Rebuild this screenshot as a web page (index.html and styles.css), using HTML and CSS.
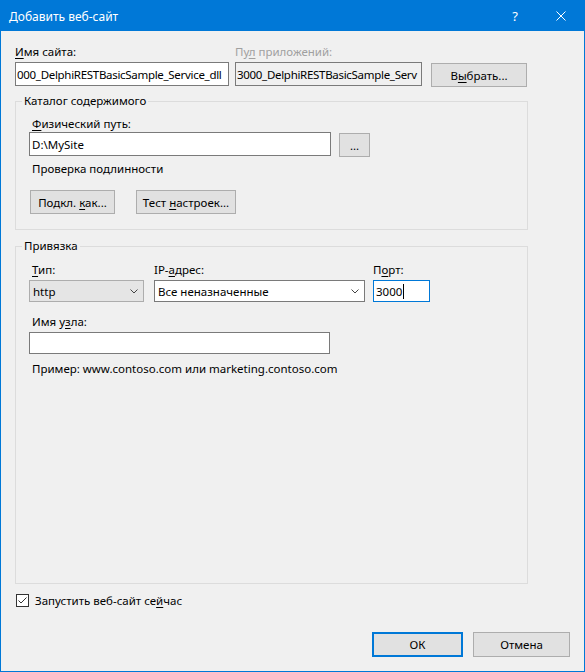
FILE: index.html
```html
<!DOCTYPE html>
<html lang="ru">
<head>
  <meta charset="UTF-8">
  <title>Добавить веб-сайт</title>
  <link rel="stylesheet" href="styles.css">
</head>
<body>
  <div class="window">
    <div class="titlebar">
      <span class="title">Добавить веб-сайт</span>
      <span class="caption-btn">?</span>
      <span class="caption-btn">
        <svg width="10" height="10" viewBox="0 0 10 10">
          <path d="M0.5 0.5 L9.5 9.5 M9.5 0.5 L0.5 9.5" stroke="#fff" stroke-width="1" fill="none"/>
        </svg>
      </span>
    </div>

    <div class="content">
      <div class="site-row">
        <div class="field site-name">
          <label><u>И</u>мя сайта:</label>
          <div class="textbox tight">000_DelphiRESTBasicSample_Service_dll</div>
        </div>
        <div class="field app-pool">
          <label class="disabled">Пу<u>л</u> приложений:</label>
          <div class="textbox tight readonly">3000_DelphiRESTBasicSample_Serv</div>
        </div>
        <button class="btn select-btn">В<u>ы</u>брать...</button>
      </div>

      <fieldset class="group content-group">
        <legend>Каталог содержимого</legend>
        <div class="group-body">
          <label class="caption path-label"><u>Ф</u>изический путь:</label>
          <div class="path-row">
            <div class="textbox path-box">D:\MySite</div>
            <button class="btn browse-btn">...</button>
          </div>
          <div class="caption auth-label">Проверка подлинности</div>
          <div class="auth-buttons">
            <button class="btn connect-btn">Подкл. <u>к</u>ак...</button>
            <button class="btn test-btn">Тест <u>н</u>астроек...</button>
          </div>
        </div>
      </fieldset>

      <fieldset class="group binding-group">
        <legend>Привязка</legend>
        <div class="group-body">
          <div class="bind-row">
            <div class="field type-field">
              <label class="caption"><u>Т</u>ип:</label>
              <div class="combo combo-gray">
                <span>http</span>
                <svg class="chevron" width="8" height="5" viewBox="0 0 8 5">
                  <path d="M0.5 0.5 L4 4 L7.5 0.5" stroke="#444" stroke-width="1" fill="none"/>
                </svg>
              </div>
            </div>
            <div class="field ip-field">
              <label>IP-<u>а</u>дрес:</label>
              <div class="combo">
                <span>Все неназначенные</span>
                <svg class="chevron" width="8" height="5" viewBox="0 0 8 5">
                  <path d="M0.5 0.5 L4 4 L7.5 0.5" stroke="#444" stroke-width="1" fill="none"/>
                </svg>
              </div>
            </div>
            <div class="field port-field">
              <label>П<u>о</u>рт:</label>
              <div class="textbox focused">3000<span class="caret"></span></div>
            </div>
          </div>
          <label class="caption host-label">Имя у<u>з</u>ла:</label>
          <div class="textbox host-box"></div>
          <div class="caption example">Пример: www.contoso.com или marketing.contoso.com</div>
        </div>
      </fieldset>

      <div class="checkbox-row">
        <svg class="checkbox" width="13" height="13" viewBox="0 0 13 13">
          <rect x="0.5" y="0.5" width="12" height="12" fill="#fff" stroke="#333"/>
          <path d="M2.5 6.5 L5 9 L10.5 3.5" stroke="#333" stroke-width="1" fill="none"/>
        </svg>
        <span>Запустить веб-сайт се<u>й</u>час</span>
      </div>

      <div class="dialog-buttons">
        <button class="btn ok-btn">ОК</button>
        <button class="btn cancel-btn">Отмена</button>
      </div>
    </div>
  </div>
</body>
</html>
```

FILE: styles.css
```css
/* Add website dialog */
* {
  box-sizing: border-box;
}

body {
  margin: 0;
  font-family: "Segoe UI", "Noto Sans", sans-serif;
  font-size: 11.5px;
  color: #000;
  background: #f0f0f0;
}

u {
  text-decoration: underline;
  text-underline-offset: 2px;
}

.window {
  width: 585px;
  height: 672px;
  border: 1px solid #0078d7;
  display: flex;
  flex-direction: column;
}

.titlebar {
  height: 30px;
  background: #0078d7;
  color: #fff;
  display: flex;
  align-items: center;
  padding-left: 8px;
}

.title {
  flex: 1;
  font-size: 12px;
}

.caption-btn {
  width: 46px;
  height: 30px;
  display: flex;
  align-items: center;
  justify-content: center;
  font-size: 13px;
}

.content {
  flex: 1;
  display: flex;
  flex-direction: column;
  padding: 13px 14px 14px 14px;
}

label,
.caption {
  display: block;
  line-height: 16px;
}

.disabled {
  color: #a0a0a0;
}

.field label {
  margin-bottom: 2px;
}

/* text boxes and buttons */
.textbox {
  height: 24px;
  border: 1px solid #7a7a7a;
  background: #fff;
  padding: 0 2px;
  display: flex;
  align-items: center;
  white-space: nowrap;
  overflow: hidden;
}

.textbox.tight {
  letter-spacing: -0.3px;
  padding: 0 1px;
}

.textbox.readonly {
  background: #f0f0f0;
}

.textbox.focused {
  border-color: #0078d7;
}

.caret {
  display: inline-block;
  width: 1px;
  height: 15px;
  background: #000;
  margin-left: 1px;
}

.btn {
  height: 24px;
  padding: 0;
  border: 1px solid #adadad;
  background: #e1e1e1;
  font-family: inherit;
  font-size: 11.5px;
  color: #000;
}

/* top row */
.site-row {
  display: flex;
  align-items: flex-start;
}

.site-name {
  width: 214px;
  margin-right: 6px;
}

.app-pool {
  width: 187px;
  margin-right: 9px;
}

.select-btn {
  width: 96px;
  margin-top: 19px;
}

/* group boxes */
.group {
  width: 513px;
  margin: 6px 0 0 0;
  border: 1px solid #dcdcdc;
  padding: 0 0 0 6px;
  min-width: 0;
}

.group legend {
  padding: 0 2px;
  line-height: 16px;
}

.group-body {
  padding-left: 7px;
}

.content-group .group-body {
  padding-bottom: 15px;
}

.path-label {
  margin-top: 7px;
  padding-left: 3px;
}

.path-row {
  display: flex;
  align-items: flex-start;
}

.path-box {
  width: 302px;
}

.browse-btn {
  width: 31px;
  margin: 1px 0 0 8px;
}

.auth-label {
  margin-top: 4px;
  padding-left: 3px;
}

.auth-buttons {
  display: flex;
  margin-top: 13px;
}

.connect-btn {
  width: 85px;
  margin-left: 1px;
}

.test-btn {
  width: 100px;
  margin-left: 21px;
}

.binding-group {
  flex: 1;
  margin-top: 8px;
}

.bind-row {
  display: flex;
  margin-top: 8px;
}

.type-field {
  width: 115px;
}

.type-field label,
.host-label,
.example {
  padding-left: 3px;
}

.ip-field {
  width: 211px;
  margin-left: 10px;
}

.port-field {
  width: 57px;
  margin-left: 8px;
}

.port-field .textbox {
  height: 22px;
}

.combo {
  height: 22px;
  border: 1px solid #7a7a7a;
  background: #fff;
  display: flex;
  align-items: center;
  padding: 0 5px 0 3px;
}

.combo span {
  flex: 1;
}

.combo-gray {
  background: #e5e5e5;
  border-color: #adadad;
}

.host-label {
  margin-top: 12px;
  margin-bottom: 2px;
}

.host-box {
  width: 301px;
  height: 22px;
}

.example {
  margin-top: 7px;
}

/* bottom */
.checkbox-row {
  display: flex;
  align-items: center;
  height: 16px;
  margin-top: 8px;
  padding-left: 1px;
}

.checkbox-row span {
  margin-left: 6px;
}

.dialog-buttons {
  display: flex;
  justify-content: flex-end;
  gap: 10px;
  margin-top: 24px;
}

.ok-btn,
.cancel-btn {
  height: 25px;
}

.ok-btn {
  width: 91px;
  border: 2px solid #0078d7;
}

.cancel-btn {
  width: 97px;
}
```
